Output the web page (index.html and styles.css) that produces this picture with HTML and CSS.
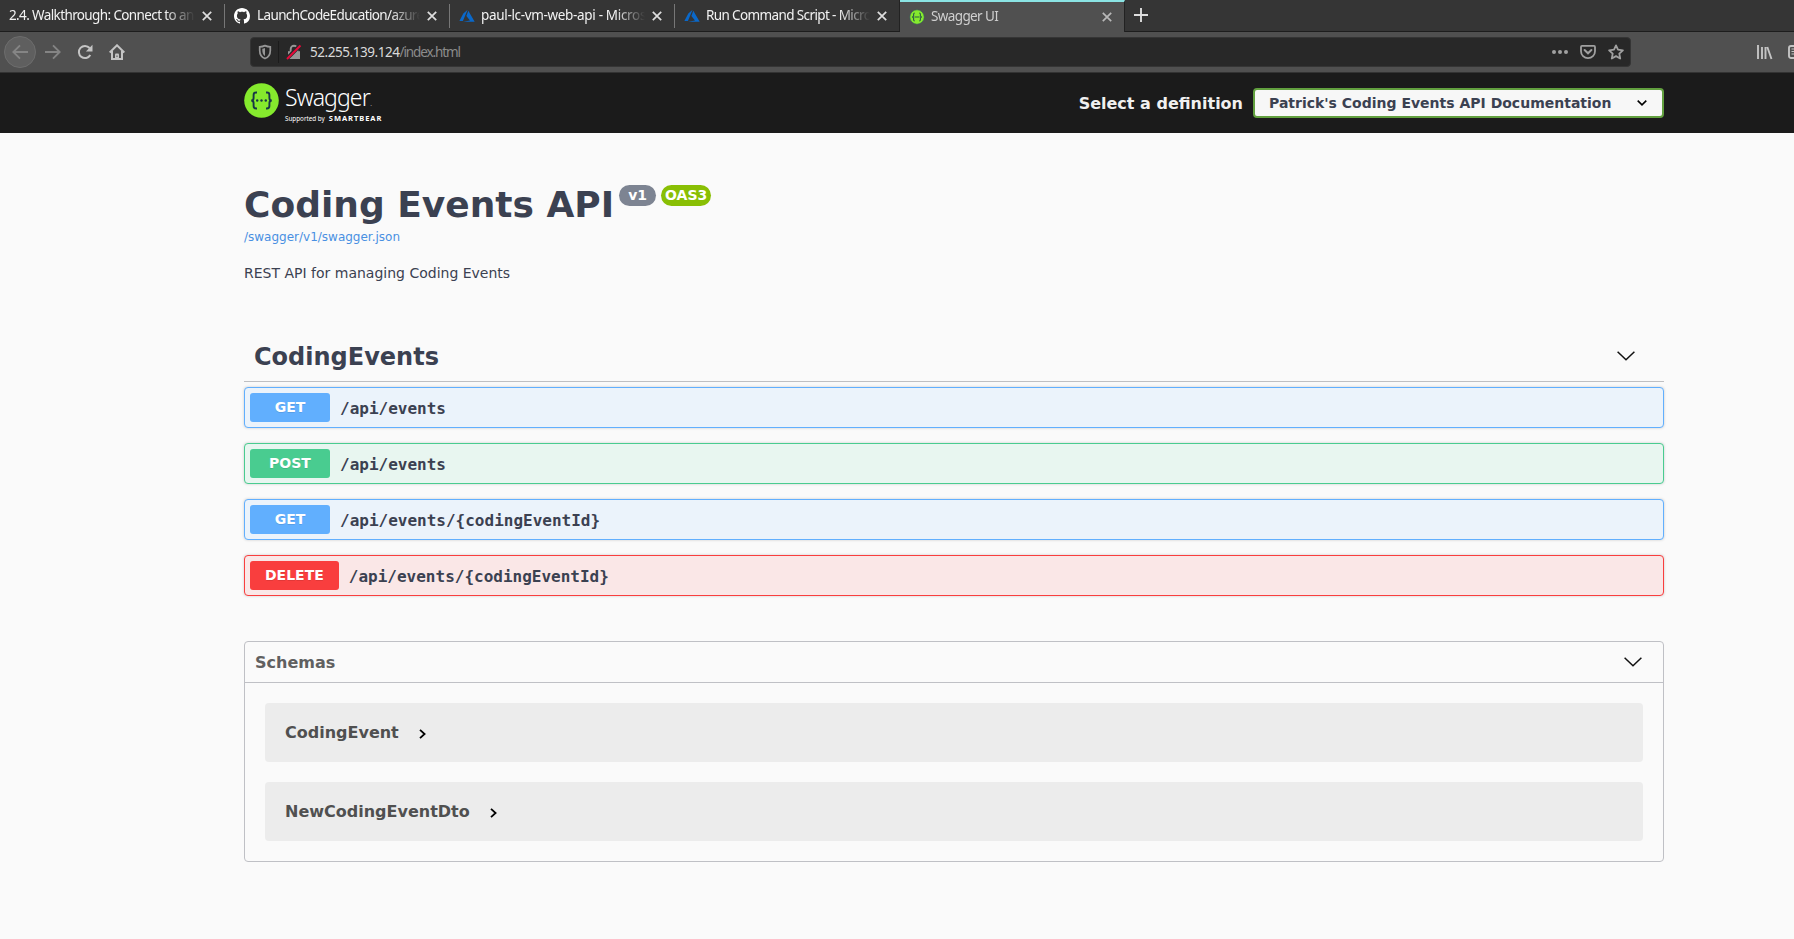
FILE: index.html
```html
<!DOCTYPE html>
<html lang="en">
<head>
<meta charset="utf-8">
<title>Swagger UI</title>
<link rel="stylesheet" href="styles.css">
</head>
<body>
<svg class="defs" width="0" height="0">
  <symbol id="close" viewBox="0 0 10 10"><path d="M.8.8 9.2 9.2M9.2.8.8 9.2" fill="none" stroke="currentColor" stroke-width="1.7"/></symbol>
  <symbol id="azure" viewBox="0 0 16 14"><path d="M8.6.7 4.3 4.4 .4 11.9h3.5zM9.3 1.7 7.4 7l3.6 4.6-7 1.2h11.7z" fill="#0a68c9"/></symbol>
  <symbol id="arrow-large" viewBox="0 0 18 10"><path d="M.6.8 9 8.8 17.4.8" fill="none" stroke="#111" stroke-width="1.5"/></symbol>
  <symbol id="arrow-small" viewBox="0 0 7 10"><path d="M1 .8 5.6 5 1 9.2" fill="none" stroke="#000" stroke-width="1.8"/></symbol>
</svg>

<nav class="tabs">
  <div class="tab tab-plain"><span class="tab-title">2.4. Walkthrough: Connect to an</span><svg class="tab-close"><use href="#close"/></svg></div>
  <div class="tab">
    <svg class="tab-icon" viewBox="0 0 16 16"><path fill="#fff" d="M8 0C3.58 0 0 3.58 0 8c0 3.54 2.29 6.53 5.47 7.59.4.07.55-.17.55-.38 0-.19-.01-.82-.01-1.49-2.01.37-2.53-.49-2.69-.94-.09-.23-.48-.94-.82-1.13-.28-.15-.68-.52-.01-.53.63-.01 1.08.58 1.23.82.72 1.21 1.87.87 2.33.66.07-.52.28-.87.51-1.07-1.78-.2-3.64-.89-3.64-3.95 0-.87.31-1.59.82-2.15-.08-.2-.36-1.02.08-2.12 0 0 .67-.21 2.2.82.64-.18 1.32-.27 2-.27s1.36.09 2 .27c1.53-1.04 2.2-.82 2.2-.82.44 1.1.16 1.92.08 2.12.51.56.82 1.27.82 2.15 0 3.07-1.87 3.75-3.65 3.95.29.25.54.73.54 1.48 0 1.07-.01 1.93-.01 2.2 0 .21.15.46.55.38A8.01 8.01 0 0 0 16 8c0-4.42-3.58-8-8-8z"/></svg>
    <span class="tab-title">LaunchCodeEducation/azure</span><svg class="tab-close"><use href="#close"/></svg>
  </div>
  <div class="tab"><svg class="tab-icon azure"><use href="#azure"/></svg><span class="tab-title title-wide">paul-lc-vm-web-api - Micros</span><svg class="tab-close"><use href="#close"/></svg></div>
  <div class="tab"><svg class="tab-icon azure"><use href="#azure"/></svg><span class="tab-title">Run Command Script - Micro</span><svg class="tab-close"><use href="#close"/></svg></div>
  <div class="tab active">
    <svg class="tab-icon" viewBox="0 0 16 16"><circle cx="8" cy="8" r="7.2" fill="#85ea2d" stroke="#35605a" stroke-width=".6"/><path d="M5.8 4Q4.6 4 4.6 5.2V7L3.6 8l1 1v1.800q0 1.200 1.200 1.200M10.200 4q1.200 0 1.200 1.200V7l1 1-1 1v1.800q0 1.200-1.200 1.200M5.500 8h5" fill="none" stroke="#2c5947" stroke-width="1.100"/></svg>
    <span class="tab-title">Swagger UI</span><svg class="tab-close"><use href="#close"/></svg>
  </div>
  <div class="new-tab"><svg width="14" height="14" viewBox="0 0 14 14"><path d="M7 0v14M0 7h14" stroke="#dedede" stroke-width="1.900"/></svg></div>
</nav>

<div class="toolbar">
  <div class="nav-buttons">
    <span class="back"><svg width="16" height="16" viewBox="0 0 16 16"><path d="M16 8H1M8 1.300 1.300 8 8 14.700" fill="none" stroke="#858585" stroke-width="1.900"/></svg></span>
    <svg width="16" height="16" viewBox="0 0 16 16"><path d="M0 8h15M8 1.300 14.700 8 8 14.700" fill="none" stroke="#848484" stroke-width="1.900"/></svg>
    <svg width="16" height="16" viewBox="0 0 16 16"><path d="M13.300 11A6.100 6.100 0 1 1 12.600 4" fill="none" stroke="#c4c4c4" stroke-width="2"/><path d="M15.500.8v6.600H8.900z" fill="#c4c4c4"/></svg>
    <svg width="16" height="16" viewBox="0 0 16 16"><path d="M.7 8.500 8 1.300l7.300 7.200M3 7v8h10V7" fill="none" stroke="#c4c4c4" stroke-width="2"/><path d="M6 15v-4.500q0-1 1-1h2q1 0 1 1V15z" fill="#c4c4c4"/><path d="M7.500 11.500h1V13h-1z" fill="#505050"/></svg>
  </div>
  <div class="urlbar">
    <svg width="14" height="16" viewBox="0 0 14 16"><path d="M7 1.600c2 .9 3.800 1.200 5.300 1.300v3.500c0 4.200-2 6.800-5.300 8.100C3.700 13.200 1.700 10.600 1.700 6.400V2.900C3.200 2.800 5 2.500 7 1.600z" fill="none" stroke="#969696" stroke-width="1.700"/><path d="M7 4v8c-1.800-1.200-2.700-3-2.700-5.700V4.800C5.300 4.700 6.200 4.400 7 4z" fill="#969696"/></svg>
    <span class="divider"></span>
    <svg width="16" height="16" viewBox="0 0 16 16"><path d="M2 7.200h12V15H2z" fill="#969696"/><path d="M4.700 8V5a3.300 3.300 0 0 1 6.600 0v3" fill="none" stroke="#969696" stroke-width="1.900"/><path d="M0 15.500 15 .5" stroke="#282828" stroke-width="4"/><path d="M1 15 14.500 1.500" stroke="#e8093a" stroke-width="2"/></svg>
    <span class="address"><b>52.255.139.124</b>/index.html</span>
    <div class="page-actions">
      <svg width="16" height="16" viewBox="0 0 16 16"><g fill="#a0a0a0"><circle cx="2" cy="8" r="2"/><circle cx="8" cy="8" r="2"/><circle cx="14" cy="8" r="2"/></g></svg>
      <svg width="16" height="16" viewBox="0 0 16 16"><path d="M2 1.900h12q1 0 1 1v4.300a7 7 0 0 1-14 0V2.900q0-1 1-1z" fill="none" stroke="#a0a0a0" stroke-width="1.800"/><path d="M4.600 6 8 9.300 11.400 6" fill="none" stroke="#a0a0a0" stroke-width="2" stroke-linecap="round"/></svg>
      <svg width="16" height="16" viewBox="0 0 16 16"><path d="m8 1.400 2 4.300 4.900.6-3.600 3.300.9 4.900L8 12.100l-4.200 2.400.9-4.900L1.100 6.300 6 5.700z" fill="none" stroke="#a0a0a0" stroke-width="1.800" stroke-linejoin="round"/></svg>
    </div>
  </div>
  <div class="side-tools">
    <svg width="16" height="16" viewBox="0 0 16 16"><path d="M1 1v14M5 3v12M8.500 3v12M10.300 3l4.200 12" fill="none" stroke="#c4c4c4" stroke-width="1.900"/></svg>
    <svg width="16" height="16" viewBox="0 0 16 16"><rect x="1" y="2" width="14" height="12" rx="2" fill="none" stroke="#c4c4c4" stroke-width="1.900"/><path d="M3.500 5H7M3.500 7.500H7M3.500 10H6M9 2v12" stroke="#c4c4c4" stroke-width="1"/></svg>
  </div>
</div>

<header class="topbar">
  <div class="wrapper topbar-row">
    <div class="logo">
      <svg width="35" height="35" viewBox="0 0 35 35"><circle cx="17.500" cy="17.500" r="17.300" fill="#85ea2d"/><path d="M13 9.500h-1q-2.400 0-2.400 2.400v3Q9.600 17.500 7.200 17.500q2.400 0 2.400 2.600v3q0 2.400 2.400 2.400h1M22 9.500h1q2.400 0 2.400 2.400v3q0 2.600 2.400 2.600-2.400 0-2.400 2.600v3q0 2.400-2.400 2.400h-1" fill="none" stroke="#173647" stroke-width="1.900"/><g fill="#173647"><circle cx="13.200" cy="17.500" r="1.200"/><circle cx="17.500" cy="17.500" r="1.200"/><circle cx="21.800" cy="17.500" r="1.200"/></g></svg>
      <div class="brand">
        <div class="brand-name">Swagger<small>.</small></div>
        <div class="brand-sub"><span>Supported by</span><b>SMARTBEAR</b></div>
      </div>
    </div>
    <div class="definition">
      <span>Select a definition</span>
      <div class="select">Patrick's Coding Events API Documentation<svg width="10" height="6" viewBox="0 0 10 6"><path d="M.7.7 5 4.800 9.300.7" fill="none" stroke="#000" stroke-width="1.600"/></svg></div>
    </div>
  </div>
</header>

<main class="wrapper">
  <section class="info">
    <h1>Coding Events API<span class="pill version">v1</span><span class="pill oas">OAS3</span></h1>
    <a class="spec-link">/swagger/v1/swagger.json</a>
    <p>REST API for managing Coding Events</p>
  </section>

  <section>
    <h2 class="tag">CodingEvents<svg width="18" height="10"><use href="#arrow-large"/></svg></h2>
    <div class="operations">
      <div class="op get"><span class="method">GET</span><span class="path">/api/events</span></div>
      <div class="op post"><span class="method">POST</span><span class="path">/api/events</span></div>
      <div class="op get"><span class="method">GET</span><span class="path">/api/events/{codingEventId}</span></div>
      <div class="op delete"><span class="method">DELETE</span><span class="path">/api/events/{codingEventId}</span></div>
    </div>
  </section>

  <section class="models">
    <h3>Schemas<svg width="18" height="10"><use href="#arrow-large"/></svg></h3>
    <div class="model-list">
      <div class="model">CodingEvent<svg width="7" height="10"><use href="#arrow-small"/></svg></div>
      <div class="model">NewCodingEventDto<svg width="7" height="10"><use href="#arrow-small"/></svg></div>
    </div>
  </section>
</main>
</body>
</html>
```

FILE: styles.css
```css
* { box-sizing: border-box; }
body { margin: 0; width: 1794px; height: 939px; overflow: hidden; background: #fafafa; color: #3b4151; font-family: "DejaVu Sans", sans-serif; }
svg { display: block; flex: none; }
.defs { position: absolute; }

/* Browser tabs */
.tabs { display: flex; height: 32px; background: #353535; border-bottom: 1px solid #1d1d1d; font-family: "Noto Sans", sans-serif; font-size: 13.500px; color: #f2f2f2; }
.tab { display: flex; align-items: center; flex: none; width: 225px; height: 31px; padding: 0 13px 0 9px; background: linear-gradient(#777, #777) right 0 top 4px / 1px 24px no-repeat; }
.tab:nth-child(4) { background: none; border-right: 1px solid #222; padding-right: 12px; }
.tab-icon { width: 16px; height: 16px; margin-right: 7px; }
.tab-icon.azure { height: 14px; margin-right: 6px; }
.tab-title { flex: 1; min-width: 0; height: 24px; line-height: 23px; margin-right: 7px; white-space: nowrap; overflow: hidden; letter-spacing: -.62px; -webkit-mask-image: linear-gradient(to left, transparent, #000 30px); mask-image: linear-gradient(to left, transparent, #000 30px); }
.title-wide { letter-spacing: -.33px; }
.tab-close { width: 10px; height: 10px; color: #dedede; }
.active { height: 32px; background: #505050; border-top: 2px solid #8be4e4; color: #cfcfcf; padding: 0 12px 1px 9px; border-right: 1px solid #222; }
.active .tab-close { color: #b8b8b8; }
.active .tab-icon { margin-right: 6px; }
.new-tab { padding: 8px 9px; }

/* Navigation toolbar */
.toolbar { display: flex; align-items: center; height: 41px; padding-left: 4px; background: #505050; border-bottom: 1px solid #333; }
.nav-buttons { display: flex; align-items: center; width: 246px; gap: 16px; }
.back { display: grid; place-items: center; width: 32px; height: 32px; margin-right: -7px; border: 1px solid #6d6d6d; border-radius: 50%; background: #5f5f5f; }
.urlbar { display: flex; align-items: center; width: 1381px; height: 30px; padding: 0 6px 0 7px; border: 1px solid #353535; border-radius: 4px; background: #282828; font-family: "Noto Sans", sans-serif; font-size: 13.500px; color: #8b8b8b; }
.divider { width: 1px; height: 22px; margin: 0 7px 0 6px; background: #1b1b1b; }
.address { margin-left: 8px; letter-spacing: -1.1px; line-height: 20px; }
.address b { font-weight: 400; color: #dadada; letter-spacing: -.45px; }
.page-actions { display: flex; gap: 12px; margin-left: auto; }
.side-tools { display: flex; gap: 15px; margin-left: 126px; width: 37px; overflow: hidden; }

/* Swagger header */
.wrapper { width: 1420px; margin: 0 0 0 244px; }
.topbar { height: 60px; background: #1b1b1b; }
.topbar-row { display: flex; justify-content: space-between; align-items: center; height: 60px; }
.logo { display: flex; gap: 6px; height: 41px; }
.brand { color: #fff; font-family: "Noto Sans", sans-serif; }
.brand-name { height: 29px; line-height: 29px; font-size: 23px; font-weight: 300; letter-spacing: -.9px; }
.brand-name small { font-size: 11px; color: #999; }
.brand-sub { display: flex; align-items: baseline; gap: 4px; height: 12px; line-height: 12px; font-size: 6.300px; }
.brand-sub b { font-size: 7.500px; letter-spacing: .95px; }
.definition { display: flex; align-items: center; gap: 10px; color: #f0f0f0; font-size: 16px; font-weight: 700; }
.select { display: flex; align-items: center; justify-content: space-between; width: 411px; height: 30px; padding: 0 15px 0 14px; border: 2px solid #62a03f; border-radius: 4px; background: #f7f7f7; color: #3b4151; font-size: 14px; }

/* API description */
.info { padding-top: 50px; height: 201px; }
h1 { display: flex; align-items: flex-start; height: 44px; margin: 0; font-size: 36px; line-height: 43px; }
.pill { height: 21px; margin-top: 2px; border-radius: 21px; color: #fff; font-size: 14px; line-height: 21px; text-align: center; }
.version { width: 37px; margin-left: 5px; background: #7d8492; }
.oas { width: 50px; margin-left: 5px; background: #89bf04; }
.spec-link { display: block; height: 20px; color: #4990e2; font-size: 12px; line-height: 20px; }
.info p { margin: 15px 0 0; font-size: 14px; line-height: 22px; }

/* Operations */
.tag { display: flex; align-items: center; justify-content: space-between; height: 48px; margin: 0; padding: 0 29px 2px 10px; border-bottom: 1px solid #bebfc2; font-size: 24px; }
.tag svg { margin-bottom: 2px; }
.operations { display: grid; gap: 15px; margin-top: 5px; }
.op { display: flex; align-items: center; gap: 10px; height: 41px; padding: 0 5px; border: 1px solid var(--color); border-radius: 4px; background: var(--tint); box-shadow: 0 0 3px rgba(0, 0, 0, .19); }
.get { --color: #61affe; --tint: #ebf3fb; }
.post { --color: #49cc90; --tint: #e8f6f0; }
.delete { --color: #f93e3e; --tint: #fae7e7; }
.method { min-width: 80px; height: 29px; padding: 0 15px; border-radius: 3px; background: var(--color); color: #fff; font-size: 14px; font-weight: 700; line-height: 28px; text-align: center; text-shadow: 0 1px 0 rgba(0, 0, 0, .1); }
.path { font-family: "DejaVu Sans Mono", monospace; font-size: 16px; font-weight: 700; line-height: 20px; padding-top: 2px; }

/* Schemas */
.models { height: 221px; margin-top: 45px; border: 1px solid #bfc0c5; border-radius: 4px; }
.models h3 { display: flex; align-items: center; justify-content: space-between; height: 41px; margin: 0; padding: 0 21px 0 10px; border-bottom: 1px solid #bfc0c5; color: #606060; font-size: 16px; }
.model-list { display: grid; gap: 20px; padding: 20px; }
.model { display: flex; align-items: center; gap: 20px; height: 59px; padding: 0 20px; border-radius: 4px; background: #ececec; color: #505050; font-size: 16px; font-weight: 700; }
.model svg { margin-top: 3px; }
```
